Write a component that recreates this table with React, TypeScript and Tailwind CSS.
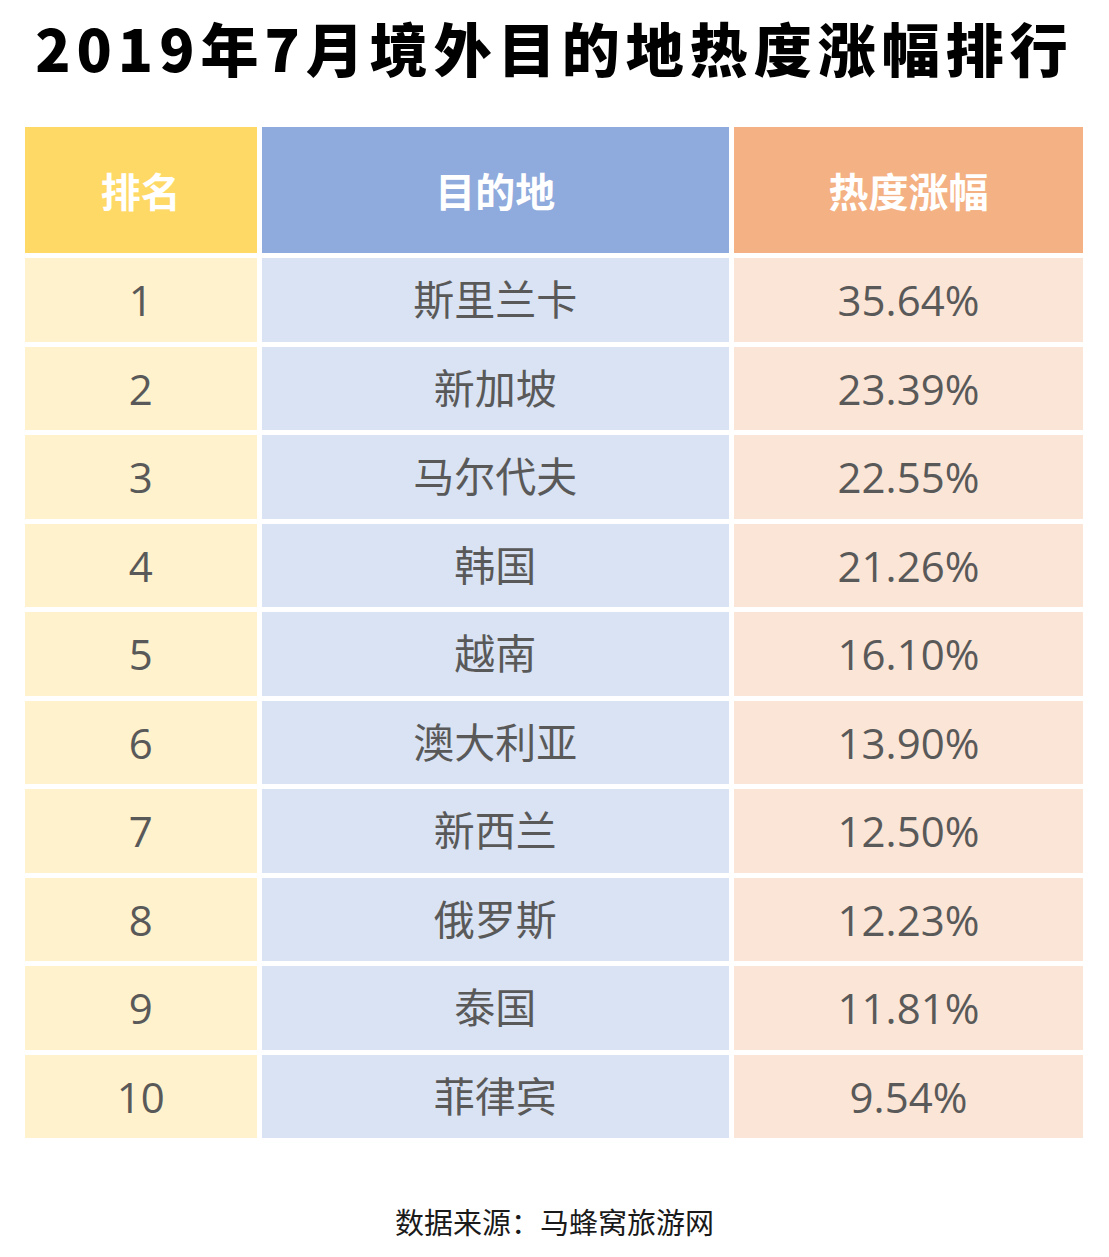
const rows = [
  ["1", "斯里兰卡", "35.64%"],
  ["2", "新加坡", "23.39%"],
  ["3", "马尔代夫", "22.55%"],
  ["4", "韩国", "21.26%"],
  ["5", "越南", "16.10%"],
  ["6", "澳大利亚", "13.90%"],
  ["7", "新西兰", "12.50%"],
  ["8", "俄罗斯", "12.23%"],
  ["9", "泰国", "11.81%"],
  ["10", "菲律宾", "9.54%"],
];

export default function App() {
  return (
    <div className="w-[1109px] h-[1257px] bg-white font-['Open_Sans','Noto_Sans_CJK_SC',sans-serif]">
      <h1 className="pt-[12px] h-[127px] text-center text-[58px] leading-[70px] font-black tracking-[6px] text-black font-['Noto_Sans_CJK_SC',sans-serif]">
        2019年7月境外目的地热度涨幅排行
      </h1>

      <div className="ml-[25px] grid grid-cols-[231.5px_467.5px_349px] gap-[5px]">
        <div className="h-[126px] flex items-center justify-center bg-[#FFD966] text-white text-[40px] font-bold font-['Noto_Sans_CJK_SC',sans-serif]">排名</div>
        <div className="h-[126px] flex items-center justify-center bg-[#8FAADC] text-white text-[40px] font-bold font-['Noto_Sans_CJK_SC',sans-serif]">目的地</div>
        <div className="h-[126px] flex items-center justify-center bg-[#F4B183] text-white text-[40px] font-bold font-['Noto_Sans_CJK_SC',sans-serif]">热度涨幅</div>

        {rows.map(([rank, place, pct]) => (
          <>
            <div key={rank + "a"} className="h-[83.5px] flex items-center justify-center bg-[#FFF2CC] text-[#595959] text-[42px]">{rank}</div>
            <div key={rank + "b"} className="h-[83.5px] flex items-center justify-center bg-[#DAE3F3] text-[#595959] text-[41px]">{place}</div>
            <div key={rank + "c"} className="h-[83.5px] flex items-center justify-center bg-[#FBE5D6] text-[#595959] text-[42px]">{pct}</div>
          </>
        ))}
      </div>

      <p className="mt-[66px] text-center text-[29px] leading-[35px] text-[#1a1a1a] font-['Noto_Sans_CJK_SC',sans-serif]">
        数据来源：马蜂窝旅游网
      </p>
    </div>
  );
}
